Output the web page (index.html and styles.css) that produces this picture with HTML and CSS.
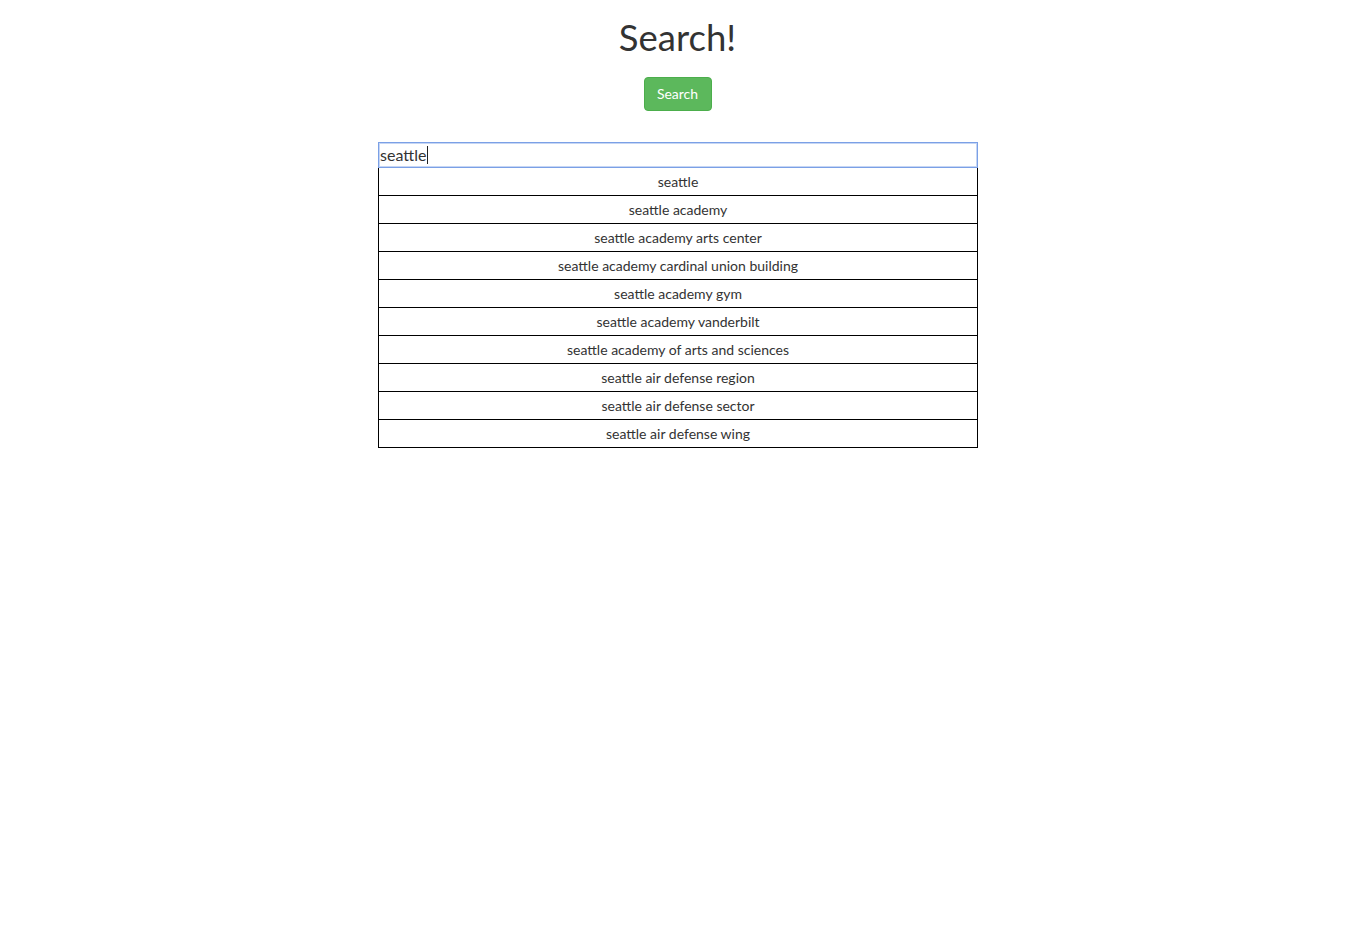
FILE: index.html
```html
<!DOCTYPE html>
<html>
<head>
<meta charset="utf-8">
<link rel="stylesheet" href="styles.css">
</head>
<body>
<div class="page">
  <h1 class="title">Search!</h1>
  <button class="btn">Search</button>
  <div class="search">
    <div class="input"><span>seattle</span><span class="caret"></span></div>
    <ul class="results">
      <li>seattle</li>
      <li>seattle academy</li>
      <li>seattle academy arts center</li>
      <li>seattle academy cardinal union building</li>
      <li>seattle academy gym</li>
      <li>seattle academy vanderbilt</li>
      <li>seattle academy of arts and sciences</li>
      <li>seattle air defense region</li>
      <li>seattle air defense sector</li>
      <li>seattle air defense wing</li>
    </ul>
  </div>
</div>
</body>
</html>
```
FILE: styles.css
```css
html, body { margin: 0; padding: 0; background: #fff; }
body { font-family: Lato, "Open Sans", sans-serif; color: #333; font-size: 14px; }
.page { display: flex; flex-direction: column; align-items: center; padding-left: 5px; }
.title { font-size: 36.5px; font-weight: 400; line-height: 40px; margin: 17px 0 20px; color: #333; }
.btn {
  font-family: Lato, sans-serif; font-size: 14px; line-height: 20px;
  padding: 6px 12px 8px; background: #5cb85c; color: #fff; border: 1px solid #4cae4c;
  border-radius: 4px; height: 34px; width: 68px;
}
.search { width: 600px; margin-top: 31px; margin-left: 1px; }
.input {
  box-sizing: border-box; height: 26px; border: 1px solid #7ba0e6;
  box-shadow: inset 0 0 0 1px #c6d6f4;
  font-size: 16px; line-height: 24px; padding-left: 1px; display: flex; align-items: center; color: #333;
}
.caret { width: 1px; height: 18px; background: #222; margin-left: 1px; }
.results { list-style: none; margin: 0; padding: 0; }
.results li {
  border: 1px solid #000; border-top: 0; height: 27px; line-height: 27px;
  text-align: center; font-size: 14px; color: #333;
}
```
